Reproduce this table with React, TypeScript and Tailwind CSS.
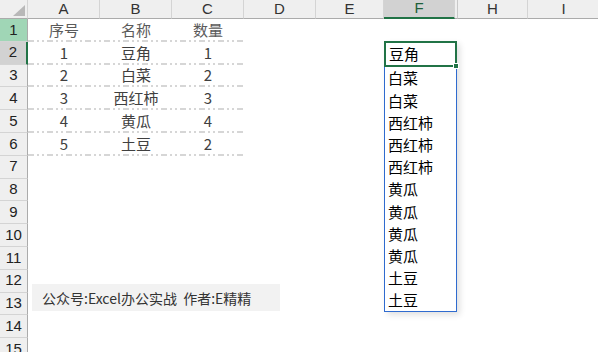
import React from 'react';

const cjk = '"Noto Sans CJK SC", "Noto Sans", sans-serif';

const cols = [
  { key: 'A', w: 'w-[72px]' },
  { key: 'B', w: 'w-[72px]' },
  { key: 'C', w: 'w-[72px]' },
  { key: 'D', w: 'w-[72px]' },
  { key: 'E', w: 'w-[68px]' },
];

const table = [
  ['序号', '名称', '数量'],
  ['1', '豆角', '1'],
  ['2', '白菜', '2'],
  ['3', '西红柿', '3'],
  ['4', '黄瓜', '4'],
  ['5', '土豆', '2'],
];

const picks = ['白菜', '白菜', '西红柿', '西红柿', '西红柿', '黄瓜', '黄瓜', '黄瓜', '黄瓜', '土豆', '土豆'];

// dash-dot-dot border drawn under each table row
const dash =
  'h-[2px] bg-[repeating-linear-gradient(90deg,#d6d6d6_0_6px,transparent_6px_9px,#d6d6d6_9px_11px,transparent_11px_14px,#d6d6d6_14px_16px,transparent_16px_19px)]';

function ColHeader({ label, w, active }: { label: string; w: string; active?: boolean }) {
  return (
    <div
      className={`${w} shrink-0 flex items-center justify-center border-r border-[#d4d4d4] text-[15px] ${
        active ? 'bg-[#d2d2d2] border-b-2 border-b-[#217346] text-[#1e5f3a]' : 'bg-[#efefef] border-b border-b-[#ababab] text-[#333]'
      }`}
    >
      {label}
    </div>
  );
}

function RowHeader({ n }: { n: number }) {
  const bg = n === 1 ? 'bg-[#a0d6b6]' : n === 2 ? 'bg-[#d2d2d2]' : 'bg-[#efefef]';
  const right = n === 2 ? 'border-r-2 border-r-[#217346]' : 'border-r border-r-[#ababab]';
  return (
    <div className={`w-[28px] shrink-0 flex items-center justify-center border-b border-[#d4d4d4] ${bg} ${right} text-[15px] text-[#222]`}>
      {n}
    </div>
  );
}

export default function App() {
  const rows = Array.from({ length: 15 }, (_, i) => i + 1);

  return (
    <div className="relative w-[598px] h-[352px] overflow-hidden bg-white" style={{ fontFamily: '"Liberation Sans", Arial, sans-serif' }}>
      {/* column headers */}
      <div className="flex h-[19px]">
        <div className="w-[28px] shrink-0 relative bg-[#efefef] border-r border-[#d4d4d4] border-b border-b-[#ababab]">
          <svg className="absolute left-[13px] top-[5px]" width="12" height="11" viewBox="0 0 12 11">
            <polygon points="12,0 12,11 0,11" fill="#b8b8b8" />
          </svg>
        </div>
        {cols.map((c) => (
          <ColHeader key={c.key} label={c.key} w={c.w} />
        ))}
        <ColHeader label="F" w="w-[71px]" active />
        <div className="w-[3px] shrink-0 bg-[#efefef] border-r border-[#c8c8c8] border-b border-b-[#ababab]" />
        <ColHeader label="H" w="w-[70px]" />
        <ColHeader label="I" w="w-[72px]" />
      </div>

      {/* sheet body */}
      {rows.map((n) => {
        const data = table[n - 1];
        return (
          <div key={n} className="flex h-[22.8px]">
            <RowHeader n={n} />
            {data ? (
              <div className="flex flex-col w-[216px] shrink-0">
                <div className="flex flex-1 items-center" style={{ fontFamily: cjk }}>
                  {data.map((v, i) => (
                    <div
                      key={i}
                      className={`w-[72px] text-center text-[15px] leading-none ${n === 1 ? 'text-[#5a5a5a]' : 'text-[#404040]'}`}
                    >
                      {v}
                    </div>
                  ))}
                </div>
                <div className={dash} />
              </div>
            ) : null}
          </div>
        );
      })}

      {/* pick-from-list popup on F2 */}
      <div
        className="absolute left-[384px] top-[41px] w-[73px] h-[271px] bg-white border border-[#2f6bcf] shadow-[3px_3px_6px_rgba(0,0,0,0.12)] flex flex-col"
        style={{ fontFamily: cjk }}
      >
        <div className="relative -mx-px -mt-px h-[26px] border-2 border-[#217346] flex items-center pl-[3px] text-[15px] leading-none text-black">
          豆角
          <div className="absolute right-[-4px] bottom-[-4px] w-[6px] h-[6px] bg-[#217346] border border-white" />
        </div>
        {picks.map((p, i) => (
          <div key={i} className="h-[22.3px] flex items-center pl-[3px] text-[15px] leading-none text-black">
            {p}
          </div>
        ))}
      </div>

      {/* text box */}
      <div
        className="absolute left-[32px] top-[284px] w-[248px] h-[27px] bg-[#f2f2f2] flex items-center pl-[10px] text-[14px] leading-none text-[#333]"
        style={{ fontFamily: cjk }}
      >
        公众号:Excel办公实战&nbsp;&nbsp;作者:E精精
      </div>
    </div>
  );
}
